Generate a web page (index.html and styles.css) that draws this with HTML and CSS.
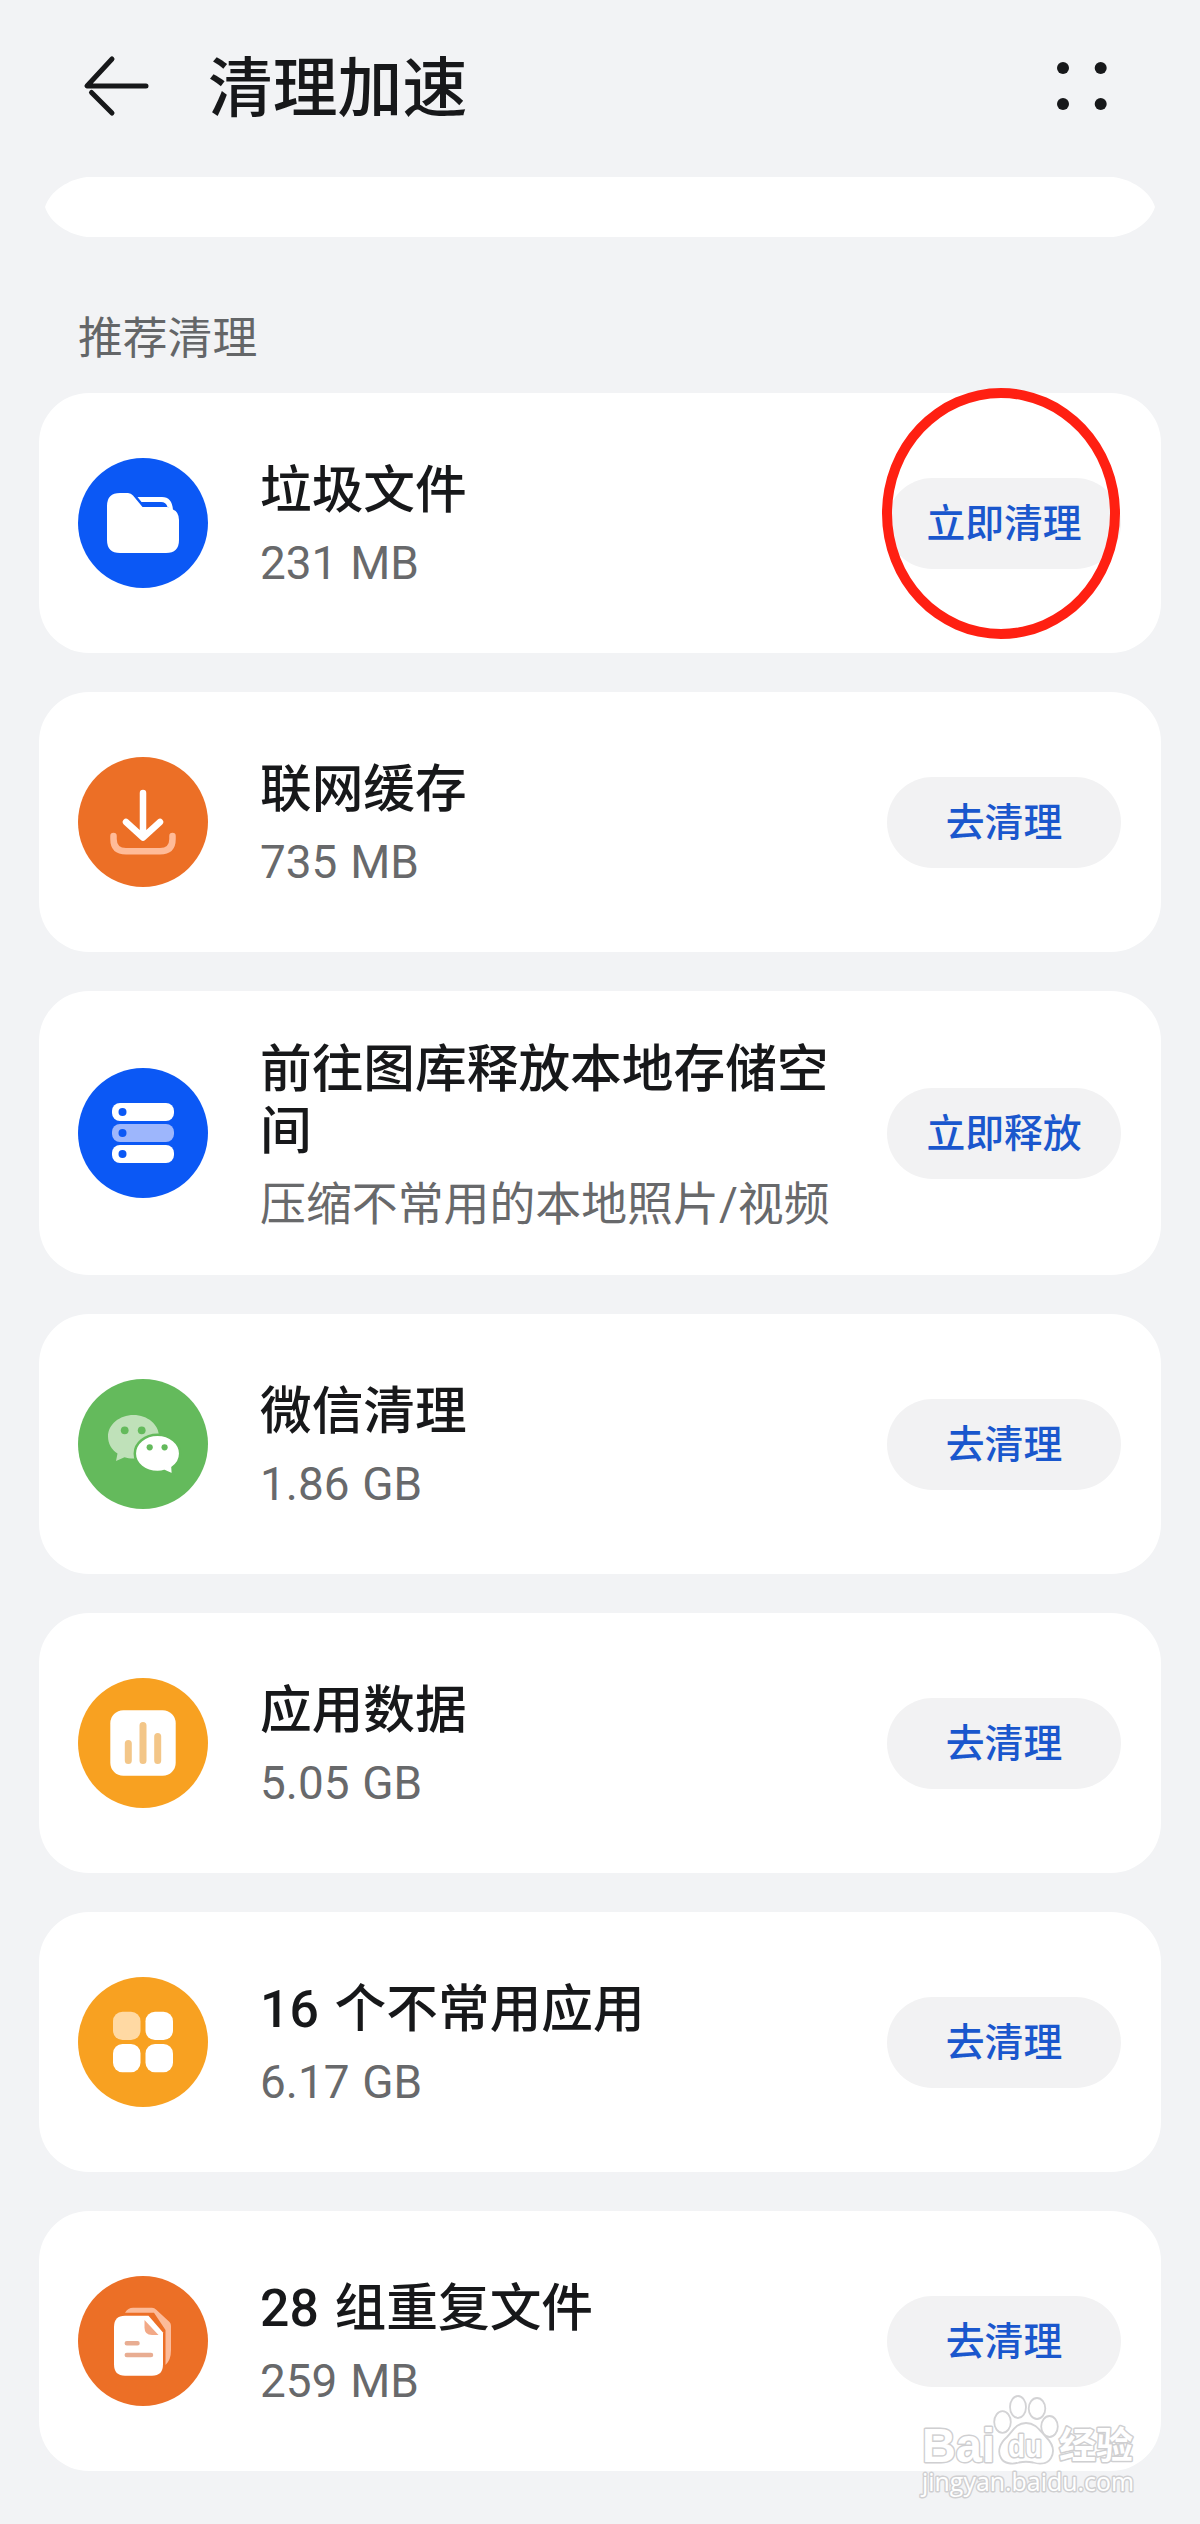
FILE: index.html
```html
<!DOCTYPE html>
<html lang="zh-CN">
<head>
<meta charset="utf-8">
<title>清理加速</title>
<link rel="stylesheet" href="styles.css">
</head>
<body>
<header class="topbar">
  <svg class="back" viewBox="0 0 68 64"><path d="M30 5 L5 32 H64 M9.500 38.500 L30 59"/></svg>
  <h1 class="page-title">清理加速</h1>
  <svg class="more" viewBox="0 0 52 50"><circle cx="7" cy="7" r="6"/><circle cx="44.700" cy="7" r="6"/><circle cx="7" cy="43" r="6"/><circle cx="44.700" cy="43" r="6"/></svg>
</header>
<div class="strip"></div>
<h2 class="section-label">推荐清理</h2>
<main class="list">
  <section class="card">
    <svg class="icon" viewBox="0 0 130 130">
      <circle cx="65" cy="65" r="65" fill="#0b58f5"/>
      <path fill="#fff" d="M42 35H50Q53 35 55 37.500L64.500 49H89Q93 49 95 51.500Q101 54 101 62V82Q101 95 88 95H42Q29 95 29 82V48Q29 35 42 35Z"/>
      <path fill="#fff" d="M59.500 39H84Q94 39 95 52L89.500 49Q88 44 83 44H63.500Z"/>
    </svg>
    <div class="info"><div class="name">垃圾文件</div><div class="detail">231 MB</div></div>
    <div class="action"><button class="btn">立即清理</button><span class="ring"></span></div>
  </section>
  <section class="card">
    <svg class="icon" viewBox="0 0 130 130" fill="none" stroke-linecap="round" stroke-linejoin="round">
      <circle cx="65" cy="65" r="65" fill="#ec6f26"/>
      <path stroke="#ffbb98" stroke-width="6.500" d="M35.500 79V82Q35.500 94.300 48 94.300H82Q94.500 94.300 94.500 82V79"/>
      <path stroke="#fff" stroke-width="6.500" d="M65 36V80M48 65L65 80.500L82 65"/>
    </svg>
    <div class="info"><div class="name">联网缓存</div><div class="detail">735 MB</div></div>
    <div class="action"><button class="btn">去清理</button></div>
  </section>
  <section class="card tall">
    <svg class="icon" viewBox="0 0 130 130">
      <circle cx="65" cy="65" r="65" fill="#0b58f5"/>
      <rect x="34" y="35" width="62" height="18" rx="8" fill="#fff"/>
      <rect x="34" y="56" width="62" height="18" rx="8" fill="#9db6fc"/>
      <rect x="34" y="77" width="62" height="18" rx="8" fill="#fff"/>
      <g fill="#0b58f5"><circle cx="44.500" cy="44" r="4"/><circle cx="44.500" cy="65" r="4"/><circle cx="44.500" cy="86" r="4"/></g>
    </svg>
    <div class="info"><div class="name">前往图库释放本地存储空间</div><div class="detail">压缩不常用的本地照片/视频</div></div>
    <div class="action"><button class="btn">立即释放</button></div>
  </section>
  <section class="card">
    <svg class="icon" viewBox="0 0 130 130">
      <circle cx="65" cy="65" r="65" fill="#64ba5c"/>
      <path fill="#bfe1b9" d="M55.500 36C69.500 36 81 45.500 81 57.500S69.500 79.500 55.500 79.500C52 79.500 49 79 46.500 78.200L38 82L39.500 74.500C33.500 70.500 30 64.500 30 57.500C30 45.500 41.500 36 55.500 36Z"/>
      <path fill="#fff" stroke="#64ba5c" stroke-width="2.500" d="M79.500 55.800C92 55.800 102.200 64 102.200 74.500C102.200 80 99.500 85 94.500 88.500L95 96L86.500 92C84.500 92.700 82 93 79.500 93C67 93 56.800 85 56.800 74.500S67 55.800 79.500 55.800Z"/>
      <g fill="#64ba5c"><circle cx="46.700" cy="51.300" r="3.900"/><circle cx="63.700" cy="51.300" r="3.900"/><circle cx="71.700" cy="68.300" r="3.100"/><circle cx="86.600" cy="68.300" r="3.100"/></g>
    </svg>
    <div class="info"><div class="name">微信清理</div><div class="detail">1.86 GB</div></div>
    <div class="action"><button class="btn">去清理</button></div>
  </section>
  <section class="card">
    <svg class="icon" viewBox="0 0 130 130">
      <circle cx="65" cy="65" r="65" fill="#f8a121"/>
      <rect x="32.300" y="32.300" width="65.400" height="65.400" rx="13" fill="#fff"/>
      <path d="M50.300 65.500V82.500M65 47.500V82.500M79.700 58.500V82.500" stroke="#f3c688" stroke-width="7" stroke-linecap="round"/>
    </svg>
    <div class="info"><div class="name">应用数据</div><div class="detail">5.05 GB</div></div>
    <div class="action"><button class="btn">去清理</button></div>
  </section>
  <section class="card">
    <svg class="icon" viewBox="0 0 130 130">
      <circle cx="65" cy="65" r="65" fill="#f8a121"/>
      <rect x="35" y="34.700" width="27.500" height="28.300" rx="9.500" fill="#ffd9a3"/>
      <g fill="#fff"><rect x="67.500" y="34.700" width="27.500" height="28.300" rx="9.500"/><rect x="35" y="67" width="27.500" height="28.300" rx="9.500"/><rect x="67.500" y="67" width="27.500" height="28.300" rx="9.500"/></g>
    </svg>
    <div class="info"><div class="name">16 个不常用应用</div><div class="detail">6.17 GB</div></div>
    <div class="action"><button class="btn">去清理</button></div>
  </section>
  <section class="card">
    <svg class="icon" viewBox="0 0 130 130">
      <circle cx="65" cy="65" r="65" fill="#ec6f26"/>
      <path fill="#fcbb99" d="M47 36.700Q50 31.700 55 31.700H74Q76.500 31.700 78 33.500L91.500 46Q93 47.500 93 50V74Q93 84 87.500 89V54L76 36.700Z"/>
      <path fill="#fff" d="M47 39.700H70.500L85 56.500V88.500Q85 99.700 74 99.700H47Q36 99.700 36 88.500V51Q36 39.700 47 39.700Z"/>
      <path fill="#f2a987" d="M66.500 44L80.500 59H74Q66.500 59 66.500 51.500Z"/>
      <path stroke="#e8ad92" stroke-width="4.500" stroke-linecap="round" d="M48.800 67.300H59.500M48.800 79H73"/>
    </svg>
    <div class="info"><div class="name">28 组重复文件</div><div class="detail">259 MB</div></div>
    <div class="action"><button class="btn">去清理</button></div>
  </section>
</main>
<svg class="watermark" viewBox="0 0 230 110">
  <text class="wm-bai" x="2" y="67" textLength="73" lengthAdjust="spacingAndGlyphs">Bai</text>
  <g class="wm-shape">
    <ellipse cx="82.500" cy="27" rx="8.300" ry="10.800"/><ellipse cx="98" cy="12" rx="8" ry="11"/><ellipse cx="117" cy="13.500" rx="8.300" ry="10.500"/><ellipse cx="129.500" cy="31.500" rx="8.300" ry="10.500"/>
    <path d="M106 28C116 28 120 36 126 42C133 49 135 56 131 63C127 70 118 69 113 67.500Q106 66 99 67.500C93 69.500 84 69 81 63C77 56 80 48 87 42C93 36 96 28 106 28Z"/>
  </g>
  <text class="wm-du" x="88" y="62" textLength="34" lengthAdjust="spacingAndGlyphs">du</text>
  <text class="wm-cn" x="139" y="64">经验</text>
  <text class="wm-url" x="2" y="96" textLength="212" lengthAdjust="spacingAndGlyphs">jingyan.baidu.com</text>
</svg>
</body>
</html>
```
FILE: styles.css
```css
* { box-sizing: border-box; }
body {
  position: relative;
  margin: 0;
  width: 1200px;
  height: 2524px;
  overflow: hidden;
  background: #f2f3f5;
  font-family: Roboto, "Noto Sans CJK SC", sans-serif;
  color: #17181a;
}
.topbar {
  display: flex;
  align-items: center;
  height: 177px;
  padding: 0 92px 5px 82px;
}
.back {
  width: 68px;
  height: 64px;
  fill: none;
  stroke: #17181a;
  stroke-width: 5;
  stroke-linecap: round;
  stroke-linejoin: round;
}
.page-title {
  flex: 1;
  margin: 0 0 0 58px;
  padding-top: 5px;
  font-size: 64.800px;
  line-height: 80px;
  font-weight: 500;
}
.more { width: 52px; height: 50px; fill: #17181a; }
.strip {
  height: 60px;
  margin: 0 45px;
  background: #fff;
  clip-path: path("M42 0C24 2 5 14 0 30C5 46 24 58 42 60H1068C1086 58 1105 46 1110 30C1105 14 1086 2 1068 0Z");
}
.section-label {
  height: 156px;
  margin: 0;
  padding: 70px 0 0 78px;
  font-size: 44.800px;
  line-height: 64px;
  font-weight: 400;
  color: #646668;
}
.list {
  display: flex;
  flex-direction: column;
  gap: 39px;
  padding: 0 39px;
}
.card {
  display: flex;
  align-items: center;
  height: 260px;
  padding: 0 40px 0 39px;
  border-radius: 50px;
  background: #fff;
}
.card.tall { height: 284px; }
.icon { flex: none; width: 130px; height: 130px; }
.info { width: 580px; margin-left: 52px; padding-top: 4px; }
.name { font-size: 51.700px; line-height: 62px; font-weight: 500; word-spacing: 3px; }
.detail { margin-top: 13px; font-size: 45.900px; line-height: 56px; color: #68696b; white-space: nowrap; word-spacing: 1.500px; }
.action { position: relative; margin-left: auto; }
.btn {
  display: block;
  width: 234px;
  height: 91px;
  padding: 0;
  border: 0;
  border-radius: 46px;
  background: #f2f2f3;
  font: 500 38.800px/91px Roboto, "Noto Sans CJK SC", sans-serif;
  color: #1a57cd;
}
.ring {
  position: absolute;
  left: -5px;
  top: -90px;
  width: 238px;
  height: 251px;
  border: 10px solid #ff2012;
  border-radius: 50%;
}
.watermark {
  position: absolute;
  left: 920px;
  top: 2395px;
  width: 230px;
  height: 110px;
  overflow: visible;
}
.watermark text { fill: #fff; stroke: #cfcfd1; stroke-width: 3px; paint-order: stroke; stroke-linejoin: round; }
.wm-shape { fill: #fff; stroke: #d3d3d5; stroke-width: 1.800px; }
.wm-bai { font: bold 49px "Liberation Sans", sans-serif; }
.wm-du { font: bold 31px "Liberation Sans", sans-serif; }
.wm-cn { font: bold 37px "Noto Sans CJK SC", sans-serif; }
.wm-url { font: 400 26px "Open Sans", sans-serif; }
```
